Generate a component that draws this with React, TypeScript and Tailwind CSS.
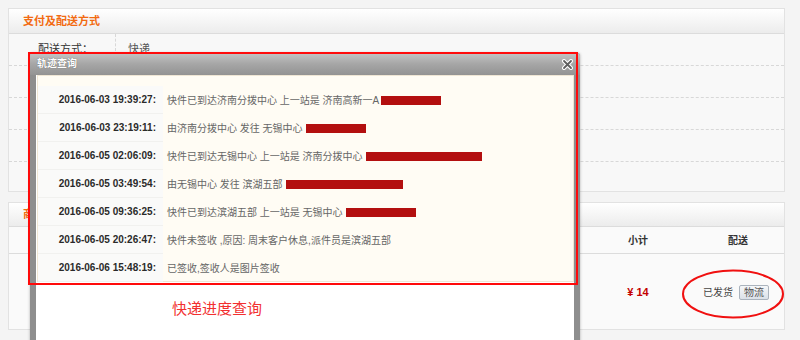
import React from "react";

const rows: { t: string; c: string; bar?: [number, number] }[] = [
  { t: "2016-06-03 19:39:27:", c: "快件已到达济南分拨中心 上一站是 济南高新一A", bar: [2, 60] },
  { t: "2016-06-03 23:19:11:", c: "由济南分拨中心 发往 无锡中心", bar: [3, 60] },
  { t: "2016-06-05 02:06:09:", c: "快件已到达无锡中心 上一站是 济南分拨中心", bar: [3, 116] },
  { t: "2016-06-05 03:49:54:", c: "由无锡中心 发往 滨湖五部", bar: [3, 117] },
  { t: "2016-06-05 09:36:25:", c: "快件已到达滨湖五部 上一站是 无锡中心", bar: [3, 70] },
  { t: "2016-06-05 20:26:47:", c: "快件未签收 ,原因: 周末客户休息,派件员是滨湖五部" },
  { t: "2016-06-06 15:48:19:", c: "已签收,签收人是图片签收" },
];

export default function App() {
  return (
    <div className="relative w-[800px] h-[340px] overflow-hidden bg-[#f4f4f4] font-['Liberation_Sans','Noto_Sans_CJK_SC',sans-serif] pt-[8px] pl-[8px]">
      {/* Panel 1 */}
      <div className="w-[777px] h-[184px] border border-[#e2e2e2] bg-[#f8f8f8] flex flex-col">
        <div className="h-[25px] shrink-0 bg-gradient-to-b from-white to-[#ececec] border-b border-[#dcdcdc] flex items-center pl-[14px]">
          <span className="text-[11px] font-bold text-[#f26a10] leading-none">支付及配送方式</span>
        </div>
        {[0, 1, 2, 3, 4].map((i) => (
          <div
            key={i}
            className={`flex h-[32px] shrink-0 ${i < 4 ? "border-b border-dashed border-[#d8d8d8]" : ""}`}
          >
            <div className="w-[107px] border-r border-dashed border-[#d8d8d8] flex items-center pl-[29px]">
              {i === 0 && <span className="text-[11px] text-[#333]">配送方式：</span>}
            </div>
            <div className="flex-1 flex items-center pl-[12px]">
              {i === 0 && <span className="text-[11px] text-[#555]">快递</span>}
            </div>
          </div>
        ))}
      </div>

      {/* Panel 2 */}
      <div className="mt-[10px] w-[777px] h-[128px] border border-[#e2e2e2] bg-[#f8f8f8] flex flex-col">
        <div className="h-[24px] shrink-0 bg-gradient-to-b from-white to-[#ececec] border-b border-[#dcdcdc] flex items-center pl-[14px]">
          <span className="text-[11px] font-bold text-[#f26a10] leading-none">商品</span>
        </div>
        <div className="h-[27px] shrink-0 flex border-b border-[#dcdcdc] bg-[#fafafa]">
          <div className="flex-1" />
          <div className="w-[108px] flex items-center justify-center">
            <span className="text-[10px] font-bold text-[#333]">小计</span>
          </div>
          <div className="w-[92px] flex items-center justify-center">
            <span className="text-[10px] font-bold text-[#333]">配送</span>
          </div>
        </div>
        <div className="flex-1 flex bg-[#fafafa]">
          <div className="flex-1" />
          <div className="w-[108px] flex items-center justify-center pt-[2px]">
            <span className="text-[11px] font-bold text-[#c40000]">¥ 14</span>
          </div>
          <div className="w-[92px] flex items-center justify-center gap-[6px] pt-[2px] pr-[4px]">
            <span className="text-[10px] text-[#444]">已发货</span>
            <span className="h-[15px] px-[4px] flex items-center border border-[#aab3bd] rounded-[2px] bg-gradient-to-b from-[#f5f7f9] to-[#dbe1e8] text-[10px] text-[#555]">
              物流
            </span>
          </div>
        </div>
      </div>

      {/* Dialog */}
      <div className="absolute left-[30px] top-[53px] w-[550px] h-[300px] bg-[#8e8e8e] rounded-t-[3px] flex flex-col shadow-[0_0_3px_rgba(0,0,0,0.3)]">
        <div className="h-[22px] shrink-0 rounded-t-[3px] bg-gradient-to-b from-[#c4c4c4] via-[#a6a6a6] to-[#939393] flex items-center justify-between pl-[7px] pr-[7px]">
          <span className="text-[10px] font-bold text-white leading-none [text-shadow:0_0_1px_#555]">轨迹查询</span>
          <svg width="11" height="11" viewBox="0 0 11 11">
            <path d="M2 2 L9 9 M9 2 L2 9" stroke="#ffffff" strokeWidth="4" strokeLinecap="round" />
            <path d="M2 2 L9 9 M9 2 L2 9" stroke="#5e5e5e" strokeWidth="1.8" strokeLinecap="round" />
          </svg>
        </div>
        <div className="flex-1 mx-[6px] bg-white flex flex-col">
          <div className="ml-[1px] h-[207px] bg-[#fffcf4] border border-[#efe6d4] pt-[10px]">
            {rows.map((r, i) => (
              <div key={i} className="flex h-[28px]">
                <div className="w-[125px] shrink-0 bg-[#fafaf9] border-b border-[#f1f1ef] flex items-center justify-end pr-[7px]">
                  <span className="text-[10px] font-bold text-[#2a2a2a] font-['Liberation_Sans',sans-serif]">{r.t}</span>
                </div>
                <div className="flex-1 flex items-center pl-[4px]">
                  <span className="text-[10px] text-[#666] whitespace-pre">{r.c}</span>
                  {r.bar && (
                    <span
                      className="inline-block h-[9px] bg-[#b30f0f]"
                      style={{ marginLeft: r.bar[0], width: r.bar[1] }}
                    />
                  )}
                </div>
              </div>
            ))}
          </div>
          <div className="pt-[15px] pl-[136px]">
            <span className="text-[15px] text-[#f23030] leading-none">快递进度查询</span>
          </div>
        </div>
      </div>

      {/* Annotation: red rectangle */}
      <div className="absolute left-[28px] top-[52px] w-[550px] h-[233px] border-[2px] border-[#ff0a0a]" />

      {/* Annotation: red ellipse */}
      <svg className="absolute left-[681px] top-[268px]" width="104" height="52" viewBox="0 0 104 52">
        <ellipse cx="52" cy="26" rx="50" ry="23.5" fill="none" stroke="#f01010" strokeWidth="2" />
      </svg>
    </div>
  );
}
